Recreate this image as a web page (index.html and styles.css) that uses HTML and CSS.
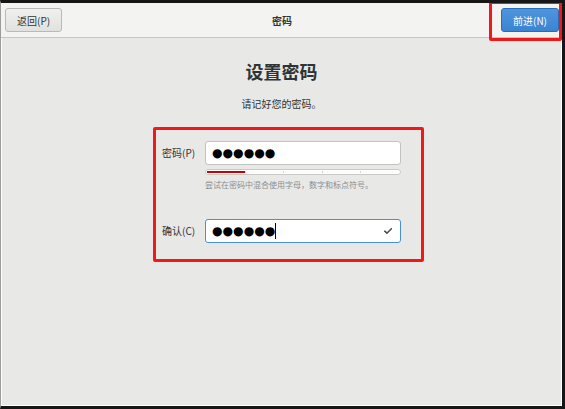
FILE: index.html
```html
<!DOCTYPE html>
<html lang="zh-CN">
<head>
    <meta charset="UTF-8">
    <meta name="viewport" content="width=device-width, initial-scale=1.0">
    <title>密码</title>
    <link rel="stylesheet" href="styles.css">
</head>
<body>
    <div class="window">
        <header class="titlebar">
            <button class="btn btn-back">返回(P)</button>
            <div class="title">密码</div>
            <button class="btn btn-next">前进(N)</button>
        </header>

        <main class="page">
            <h1 class="heading">设置密码</h1>
            <p class="subtitle">请记好您的密码。</p>

            <div class="form">
                <label class="form-label">密码(P)</label>
                <div class="field">
                    <div class="entry"><span class="dots">●●●●●●</span></div>
                    <div class="strength">
                        <span class="seg seg-weak"></span>
                        <span class="seg"></span>
                        <span class="seg"></span>
                        <span class="seg"></span>
                        <span class="seg"></span>
                    </div>
                    <p class="hint">尝试在密码中混合使用字母，数字和标点符号。</p>
                </div>

                <label class="form-label">确认(C)</label>
                <div class="field">
                    <div class="entry entry-focus">
                        <span class="dots">●●●●●●</span><span class="caret"></span>
                        <svg class="check" width="8" height="6" viewBox="0 0 8 6">
                            <path d="M0.8 3.2 L2.9 5.2 L7.4 0.8" fill="none" stroke="#4c4f50" stroke-width="1.6" stroke-linecap="round" stroke-linejoin="round"/>
                        </svg>
                    </div>
                </div>
            </div>
        </main>

        <div class="mark mark-next"></div>
        <div class="mark mark-form"></div>
    </div>
</body>
</html>
```

FILE: styles.css
```css
* {
    margin: 0;
    padding: 0;
    box-sizing: border-box;
}

body {
    font-family: "Noto Sans CJK SC", "Noto Sans", sans-serif;
    background-color: #e8e8e7;
    color: #2e3436;
}

.window {
    position: relative;
    width: 565px;
    height: 409px;
    border-top: 3px solid #161616;
    border-right: 3px solid #161616;
    border-bottom: 3px solid #161616;
    border-left: 1px solid #9c9c9c;
    background-color: #e8e8e7;
    box-shadow: inset 1px 0 0 #ffffff, inset -1px -1px 0 #ffffff;
    overflow: hidden;
}

.titlebar {
    height: 35px;
    display: grid;
    grid-template-columns: 1fr auto 1fr;
    align-items: center;
    padding: 0 3px 0 4px;
    background-color: #f3f3f2;
    border-bottom: 1px solid #c6c6c4;
}

.title {
    font-size: 10px;
    font-weight: 700;
    color: #2e3436;
}

.btn {
    height: 24px;
    padding: 0 11px;
    font-family: inherit;
    font-size: 10px;
    border-radius: 3px;
    cursor: pointer;
}

.btn-back {
    justify-self: start;
    color: #2e3436;
    background: linear-gradient(to bottom, #f0f0ef, #e1e1df);
    border: 1px solid #b9b9b6;
}

.btn-next {
    justify-self: end;
    color: #ffffff;
    background: linear-gradient(to bottom, #4f95dd, #3a84d2);
    border: 1px solid #2a6cb5;
}

.page {
    display: flex;
    flex-direction: column;
    align-items: center;
    padding-top: 21px;
}

.heading {
    font-size: 18px;
    line-height: 24px;
    font-weight: 700;
    color: #2e3436;
}

.subtitle {
    margin-top: 14px;
    font-size: 10px;
    line-height: 14px;
    color: #2e3436;
}

.form {
    margin-top: 30px;
    display: grid;
    grid-template-columns: 43px 196px;
    row-gap: 28px;
}

.form-label {
    font-size: 10px;
    line-height: 24px;
    color: #2e3436;
}

.entry {
    position: relative;
    height: 24px;
    display: flex;
    align-items: center;
    padding-left: 6px;
    background-color: #ffffff;
    border: 1px solid #c2c2bf;
    border-radius: 3px;
}

.entry-focus {
    border-color: #4a90d9;
}

.dots {
    font-family: "DejaVu Sans", sans-serif;
    font-size: 12.1px;
    line-height: 1;
    color: #000000;
}

.caret {
    width: 1px;
    height: 16px;
    background-color: #000000;
}

.check {
    position: absolute;
    right: 8px;
    top: 8px;
}

.strength {
    margin-top: 4px;
    height: 6px;
    display: flex;
    padding: 1px;
    background-color: #ffffff;
    border: 1px solid #c9c9c6;
    border-radius: 3px;
}

.seg {
    flex: 1;
    background-color: #fbfbfb;
}

.seg + .seg {
    border-left: 1px solid #d6d6d4;
}

.seg-weak {
    background-color: #cc0000;
}

.hint {
    margin-top: 4px;
    font-size: 8px;
    line-height: 12px;
    color: #8b8e8f;
}

.mark {
    position: absolute;
    border: 3px solid #f01818;
    border-radius: 2px;
    pointer-events: none;
}

.mark-next {
    left: 488px;
    top: -2px;
    width: 73px;
    height: 40px;
}

.mark-form {
    left: 152px;
    top: 124px;
    width: 271px;
    height: 135px;
}
```
